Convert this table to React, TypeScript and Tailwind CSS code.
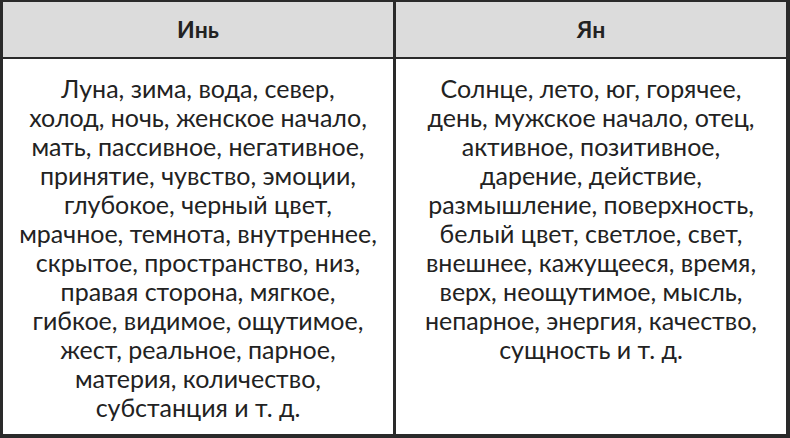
import React from "react";

const yin = [
  "Луна, зима, вода, север,",
  "холод, ночь, женское начало,",
  "мать, пассивное, негативное,",
  "принятие, чувство, эмоции,",
  "глубокое, черный цвет,",
  "мрачное, темнота, внутреннее,",
  "скрытое, пространство, низ,",
  "правая сторона, мягкое,",
  "гибкое, видимое, ощутимое,",
  "жест, реальное, парное,",
  "материя, количество,",
  "субстанция и т. д.",
];

const yang = [
  "Солнце, лето, юг, горячее,",
  "день, мужское начало, отец,",
  "активное, позитивное,",
  "дарение, действие,",
  "размышление, поверхность,",
  "белый цвет, светлое, свет,",
  "внешнее, кажущееся, время,",
  "верх, неощутимое, мысль,",
  "непарное, энергия, качество,",
  "сущность и т. д.",
];

export default function App() {
  return (
    <div
      className="w-[790px] h-[438px] bg-white text-[#222]"
      style={{ fontFamily: 'Lato, sans-serif' }}
    >
      <div className="w-[790px] h-[438px] border-l-[3px] border-r-[4px] border-t-[2px] border-b-[4px] border-[#2a2a2a] flex flex-col overflow-hidden">
        <div className="h-[57px] shrink-0 flex bg-[#dcdcdc] border-b-[2px] border-[#2a2a2a]">
          <div className="w-[390px] flex items-center justify-center text-[23px] font-bold">Инь</div>
          <div className="w-[3px] bg-[#2a2a2a]" />
          <div className="flex-1 flex items-center justify-center text-[23px] font-bold">Ян</div>
        </div>
        <div className="flex-1 flex">
          <div className="w-[390px] pt-[15px] text-center text-[25px] leading-[29px]">
            {yin.map((l, i) => (
              <div key={i}>{l}</div>
            ))}
          </div>
          <div className="w-[3px] bg-[#2a2a2a]" />
          <div className="flex-1 pt-[15px] text-center text-[25px] leading-[29px]">
            {yang.map((l, i) => (
              <div key={i}>{l}</div>
            ))}
          </div>
        </div>
      </div>
    </div>
  );
}
